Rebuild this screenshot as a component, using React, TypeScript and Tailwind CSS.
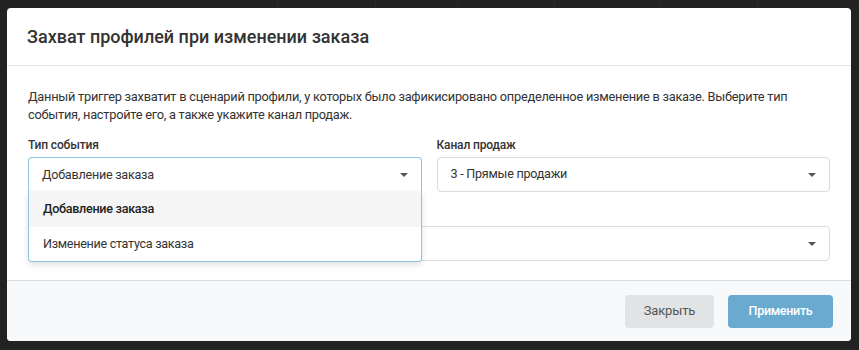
import { useState } from 'react';

const font = { fontFamily: 'Roboto, "Open Sans", sans-serif' };

// faint page columns visible above the overlay
const bgCols = [278, 98, 82, 97, 105, 98, 101];

function Caret() {
  return (
    <svg width="8" height="4" viewBox="0 0 8 4" className="shrink-0">
      <path d="M0 0 H8 L4 4 Z" fill="#555" />
    </svg>
  );
}

export default function App() {
  const [eventType] = useState('Добавление заказа');
  const options = ['Добавление заказа', 'Изменение статуса заказа'];

  return (
    <div className="w-[859px] h-[350px] bg-[#222222] overflow-hidden" style={font}>
      {/* Background page strip */}
      <div className="flex h-[8px]">
        {bgCols.map((w, i) => (
          <div key={i} className="h-full border-r border-[#2c2529]" style={{ width: w }} />
        ))}
      </div>

      {/* Modal */}
      <div className="ml-[7px] w-[844px] h-[333px] bg-white rounded-[4px] flex flex-col">
        {/* Header */}
        <div className="h-[58px] shrink-0 flex items-center px-[20px] border-b border-[#e2e2e2]">
          <h2 className="text-[18px] font-medium text-[#333]">
            Захват профилей при изменении заказа
          </h2>
        </div>

        {/* Body */}
        <div className="flex-1 px-[21px] pt-[22px]">
          <p className="text-[12.8px] leading-[18px] tracking-[-0.25px] text-[#333]">
            Данный триггер захватит в сценарий профили, у которых было зафикисировано определенное изменение в заказе. Выберите тип события, настройте его, а также укажите канал продаж.
          </p>

          <div className="grid grid-cols-2 gap-[15px] mt-[13px]">
            {/* Event type */}
            <div className="relative">
              <div className="text-[12px] leading-[16px] font-medium tracking-[-0.15px] text-[#333] mb-[4px]">Тип события</div>
              <div className="h-[35px] flex items-center justify-between pl-[13px] pr-[13px] border border-[#8fc6de] border-b-0 rounded-t-[4px] bg-white">
                <span className="text-[12.6px] tracking-[-0.25px] text-[#333]">{eventType}</span>
                <Caret />
              </div>
              {/* Open menu */}
              <div className="absolute left-0 right-0 top-[54px] z-10 bg-white border border-[#8fc6de] border-t-0 rounded-b-[4px] shadow-[0_3px_6px_rgba(0,0,0,0.12)]">
                {options.map((o) => (
                  <div
                    key={o}
                    className={
                      o === eventType
                        ? 'h-[36px] flex items-center pl-[14px] text-[12.6px] tracking-[-0.3px] font-medium text-[#222] bg-[#f5f5f5]'
                        : 'h-[34px] flex items-center pl-[14px] text-[12.6px] tracking-[-0.3px] text-[#333]'
                    }
                  >
                    {o}
                  </div>
                ))}
              </div>
            </div>

            {/* Sales channel */}
            <div>
              <div className="text-[12px] leading-[16px] font-medium tracking-[-0.15px] text-[#333] mb-[4px]">Канал продаж</div>
              <div className="h-[35px] flex items-center justify-between pl-[13px] pr-[13px] border border-[#dcdcdc] rounded-[4px]">
                <span className="text-[12.6px] tracking-[-0.25px] text-[#333]">3 - Прямые продажи</span>
                <Caret />
              </div>
            </div>
          </div>

          {/* Status (hidden by the menu) */}
          <div className="mt-[14px]">
            <div className="h-[16px] mb-[4px]" />
            <div className="h-[35px] flex items-center justify-end pr-[13px] border border-[#dcdcdc] rounded-[4px]">
              <Caret />
            </div>
          </div>
        </div>

        {/* Footer */}
        <div className="h-[61px] shrink-0 flex items-center justify-end gap-[14px] pr-[18px] bg-[#f8f9fb] border-t border-[#dcdde0] rounded-b-[4px]">
          <button className="h-[33px] w-[89px] rounded-[4px] bg-[#e2e3e5] text-[13px] tracking-[-0.15px] text-[#555]">
            Закрыть
          </button>
          <button className="h-[33px] w-[105px] rounded-[4px] bg-[#6aaace] text-[12.5px] tracking-[-0.3px] font-medium text-white">
            Применить
          </button>
        </div>
      </div>
    </div>
  );
}
